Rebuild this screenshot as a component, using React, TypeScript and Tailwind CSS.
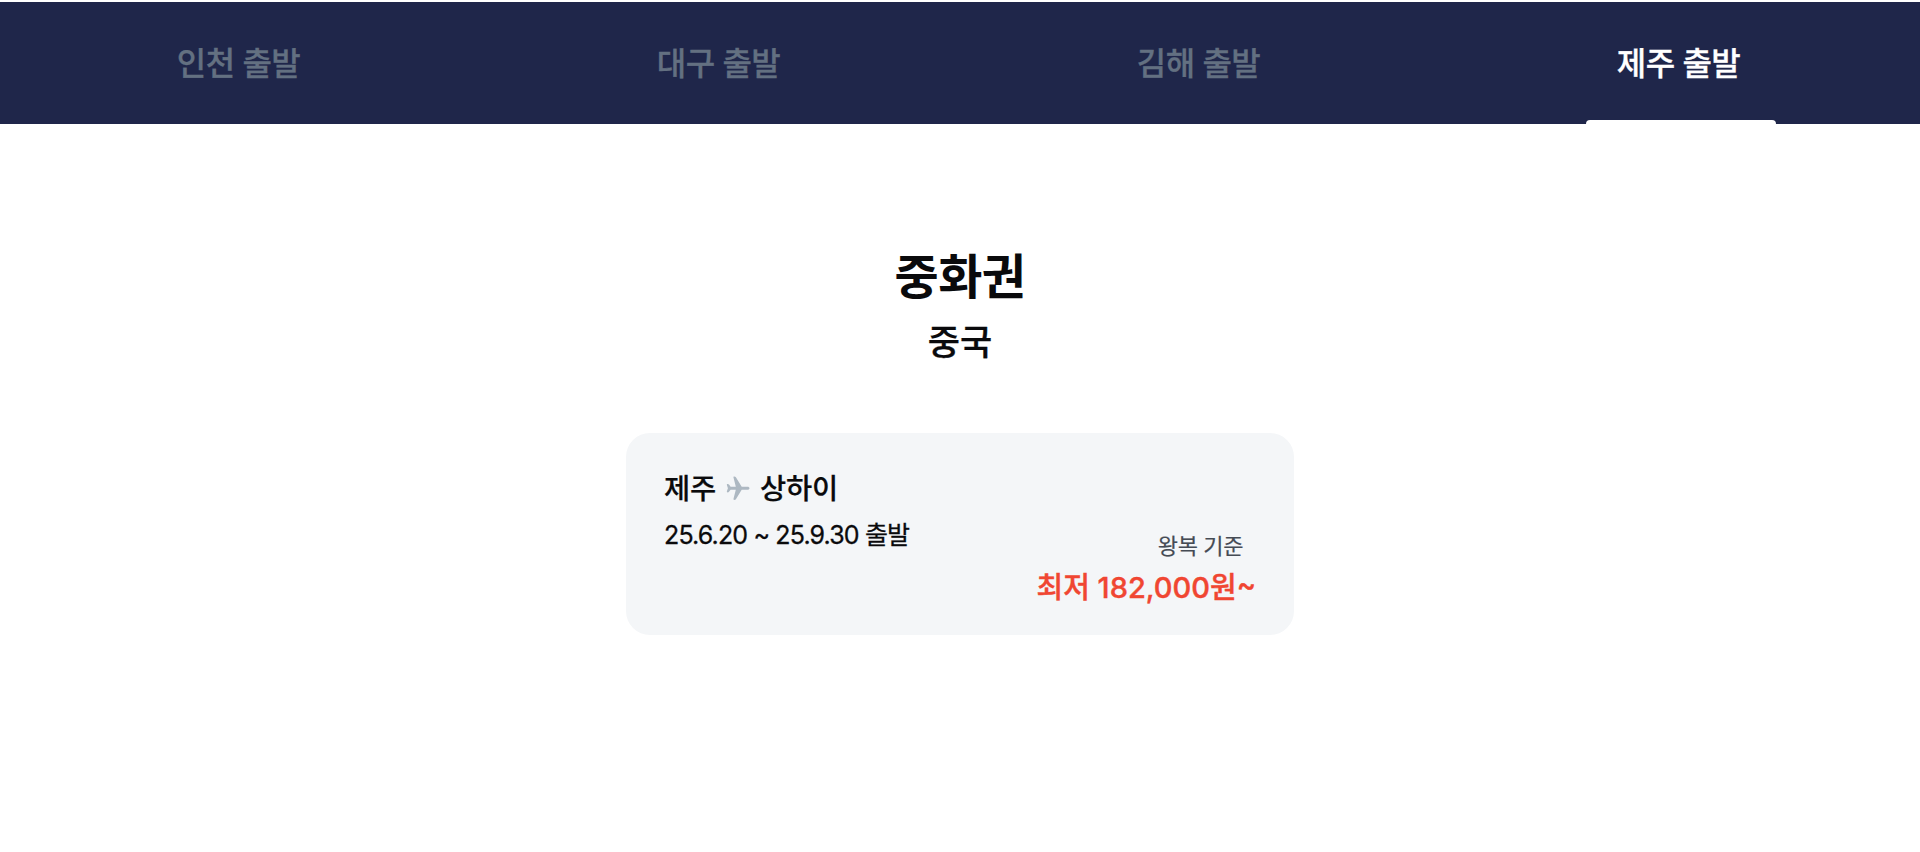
const TABS = ['인천 출발', '대구 출발', '김해 출발', '제주 출발']
const ACTIVE = '제주 출발'

function PlaneIcon() {
  return (
    <svg width="24" height="24" viewBox="0 0 24 24" className="mb-[2px] fill-[#adb8c2]">
      <path d="M23.500 12.200c0-.9-.8-1.500-2-1.500h-5.800L9.900 1.200C9.600.600 9 .400 8.300.400c-.7 0-1 .5-.8 1.200l2.300 9.100H4.600L3 8.600C2.700 8.200 2.200 8 1.700 8 1 8 .700 8.500.900 9.100l1 3.100-1 3.100c-.2.600.1 1.100.8 1.100.5 0 1-.2 1.300-.6l1.600-2.100h5.200l-2.300 9.100c-.2.700.1 1.200.8 1.200.7 0 1.300-.2 1.600-.8l5.800-9.500h5.800c1.200 0 2-.6 2-1.500z" />
    </svg>
  )
}

export default function App() {
  return (
    <div className="min-h-[852px] bg-white text-[#0a0a0c] font-['Inter','Noto_Sans_CJK_KR',sans-serif]">
      <nav className="grid h-[124px] grid-cols-4 border-t-2 border-[#8e95a8] bg-[#1f264a] [border-image:linear-gradient(#fff_50%,#8e95a8_50%)_2]">
        {TABS.map(tab => (
          <div key={tab} className="flex flex-col items-center justify-between">
            <span
              className={`mt-[39px] mr-[3px] text-[32px] leading-[46px] font-medium tracking-[-0.6px] [-webkit-text-stroke:0.3px] ${tab === ACTIVE ? 'text-white' : 'text-[#637081]'}`}
            >
              {tab}
            </span>
            {tab === ACTIVE && <div className="ml-[2px] h-1 w-[190px] rounded-t bg-white" />}
          </div>
        ))}
      </nav>

      <main className="flex flex-col items-center pt-[117px]">
        <h1 className="text-[48px] leading-[72px] font-bold tracking-[-0.5px]">중화권</h1>
        <h2 className="mt-[3px] text-[35px] leading-[52px] font-medium [-webkit-text-stroke:0.3px]">중국</h2>

        <section className="mt-[65px] flex h-[202px] w-[668px] flex-col rounded-[24px] bg-[#f4f6f8] px-[38px] pt-[34px]">
          <div className="flex items-center gap-[10px] text-[28.5px] leading-[44px] font-medium tracking-[-0.2px] [-webkit-text-stroke:0.2px]">
            <span>제주</span>
            <PlaneIcon />
            <span>상하이</span>
          </div>
          <p className="text-[25px] leading-[48px] tracking-[-0.85px] [-webkit-text-stroke:0.3px]">
            25.6.20 ~ 25.9.30 출발
          </p>
          <div className="-mt-[29px] flex flex-col items-end">
            <span className="mr-[13px] text-[22px] leading-[32px] tracking-[-0.4px] text-[#454b54] [-webkit-text-stroke:0.2px]">왕복 기준</span>
            <strong className="mt-[4px] text-[29px] leading-[44px] font-medium text-[#f04632] [-webkit-text-stroke:0.4px]">
              최저 182,000원<span className="relative -top-[3px]">~</span>
            </strong>
          </div>
        </section>
      </main>
    </div>
  )
}
